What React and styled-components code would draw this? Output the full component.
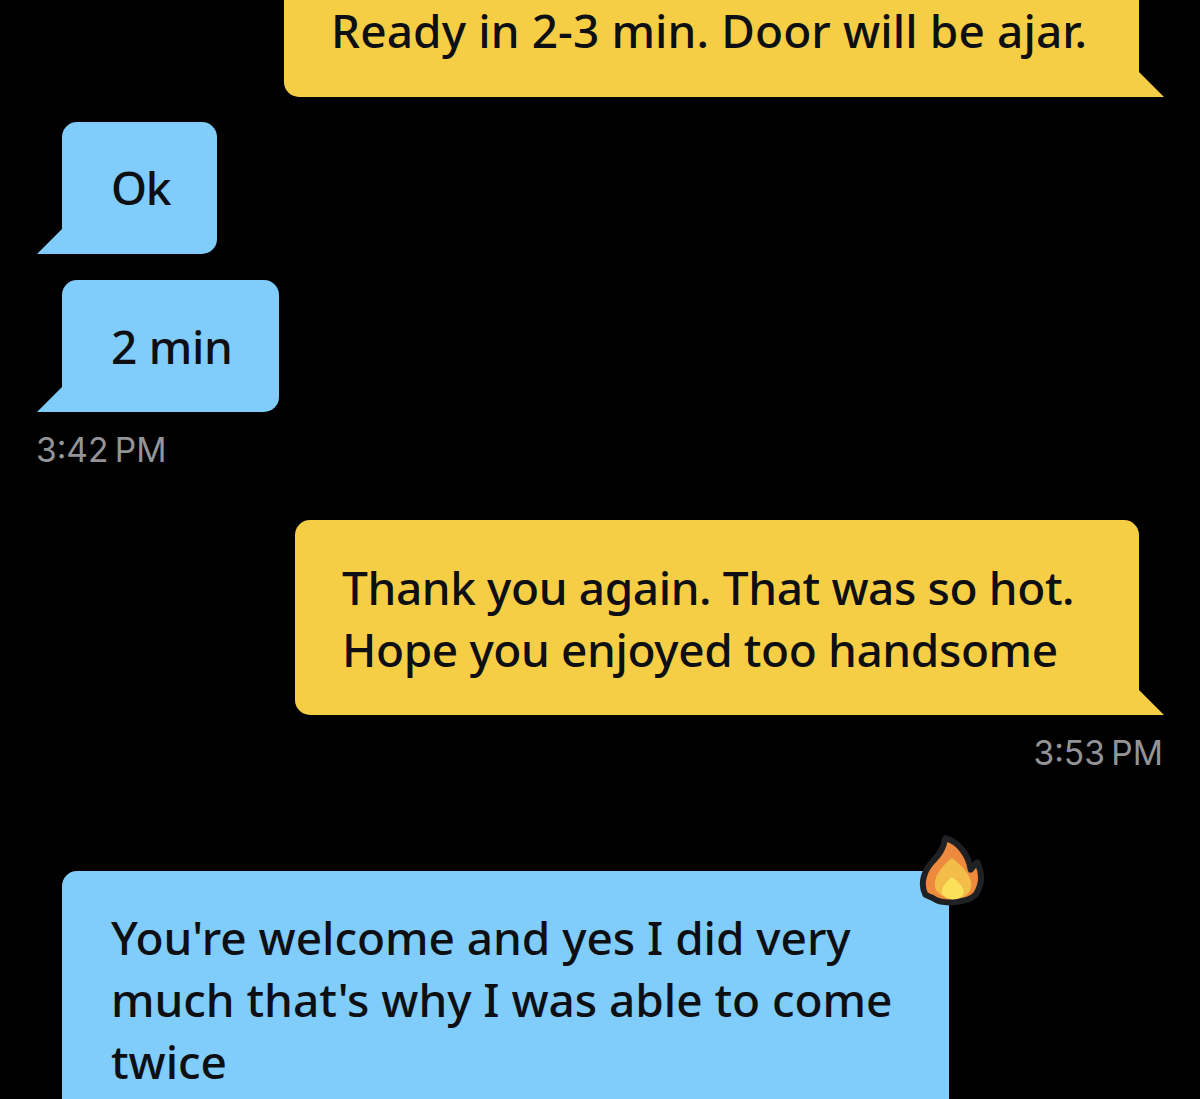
import React from 'react';
import styled, {createGlobalStyle} from 'styled-components';

const GlobalStyle = createGlobalStyle`
  html, body {
    margin: 0;
    background: #000;
  }
`

const Page = styled.div`
  height: 1099px;
  overflow: hidden;
  background: #000;
  display: flex;
  flex-direction: column;
  font-family: "Noto Sans", "Open Sans", sans-serif;
`

const Row = styled.div`
  display: flex;
  justify-content: ${p => p.$mine ? 'flex-end' : 'flex-start'};
  padding: ${p => p.$mine ? '0 61px 0 0' : '0 0 0 62px'};
  margin-top: ${p => p.$top || 0}px;
`

const Bubble = styled.div`
  position: relative;
  box-sizing: border-box;
  width: ${p => p.$width}px;
  padding: ${p => p.$pad || '35px 0 35px 49px'};
  background: ${p => p.$mine ? '#f6ce45' : '#80ccfb'};
  color: #0d0f12;
  font-size: 46px;
  font-weight: 500;
  line-height: 62px;
  letter-spacing: ${p => p.$track ?? 0.1}px;
  white-space: nowrap;
  border-radius: ${p => p.$mine ? '15px 15px 0 15px' : '15px 15px 15px 0'};

  &::after {
    content: "";
    position: absolute;
    bottom: 0;
    width: 25px;
    height: 25px;
    background: inherit;
    ${p => p.$mine
      ? 'right: -25px; clip-path: polygon(0 0, 100% 100%, 0 100%);'
      : 'left: -25px; clip-path: polygon(100% 0, 100% 100%, 0 100%);'}
  }
`

const TopBubble = styled(Bubble)`
  border-top-left-radius: 0;
  border-top-right-radius: 0;
`

const Time = styled.div`
  font-family: Inter, "Liberation Sans", sans-serif;
  font-size: 33.5px;
  line-height: 40px;
  word-spacing: -3px;
  color: #949498;
  margin-top: 18px;
  padding: ${p => p.$mine ? '0 37px 0 0' : '0 0 0 36px'};
  text-align: ${p => p.$mine ? 'right' : 'left'};
`

const Reaction = styled.svg`
  position: absolute;
  top: -38px;
  right: -37px;
  width: 69px;
  height: 74px;
`

const Flame = () => (
    <Reaction viewBox="50 40 208 222">
        <path
            d="M135 55C175 65 205 105 212 150C218 145 225 130 232 128C247 160 247 195 227 225C205 250 130 255 105 240C95 232 85 232 75 225C58 190 72 150 100 122C120 100 130 85 135 55Z"
            fill="#ee8a3e" stroke="#1f2124" strokeWidth="18" strokeLinejoin="round"/>
        <path d="M155 115C190 140 222 178 212 208C198 246 132 248 108 212C92 180 122 142 155 115Z" fill="#f3bd49"/>
        <path d="M155 172C178 188 198 210 188 226C172 246 136 244 126 222C120 205 138 188 155 172Z" fill="#fbe05a"/>
    </Reaction>
)

export default function App() {
    return (
        <Page>
            <GlobalStyle/>
            <Row $mine $top={-1}>
                <TopBubble $mine $width={855} $pad="0 0 36px 47px">Ready in 2-3 min. Door will be ajar.</TopBubble>
            </Row>
            <Row $top={25}>
                <Bubble $width={155} $pad="34px 0 36px 49px" $track={-1.2}>Ok</Bubble>
            </Row>
            <Row $top={26}>
                <Bubble $width={217} $pad="35px 0 35px 49px" $track={-0.3}>2 min</Bubble>
            </Row>
            <Time>3:42 PM</Time>
            <Row $mine $top={50}>
                <Bubble $mine $width={844} $pad="36px 0 35px 47px" $track={-0.4}>
                    Thank you again. That was so hot.<br/>
                    Hope you enjoyed too handsome
                </Bubble>
            </Row>
            <Time $mine>3:53 PM</Time>
            <Row $top={98}>
                <Bubble $width={887} $track={-0.05}>
                    <Flame/>
                    You're welcome and yes I did very<br/>
                    much that's why I was able to come<br/>
                    twice<br/>
                    &nbsp;
                </Bubble>
            </Row>
        </Page>
    )
}
